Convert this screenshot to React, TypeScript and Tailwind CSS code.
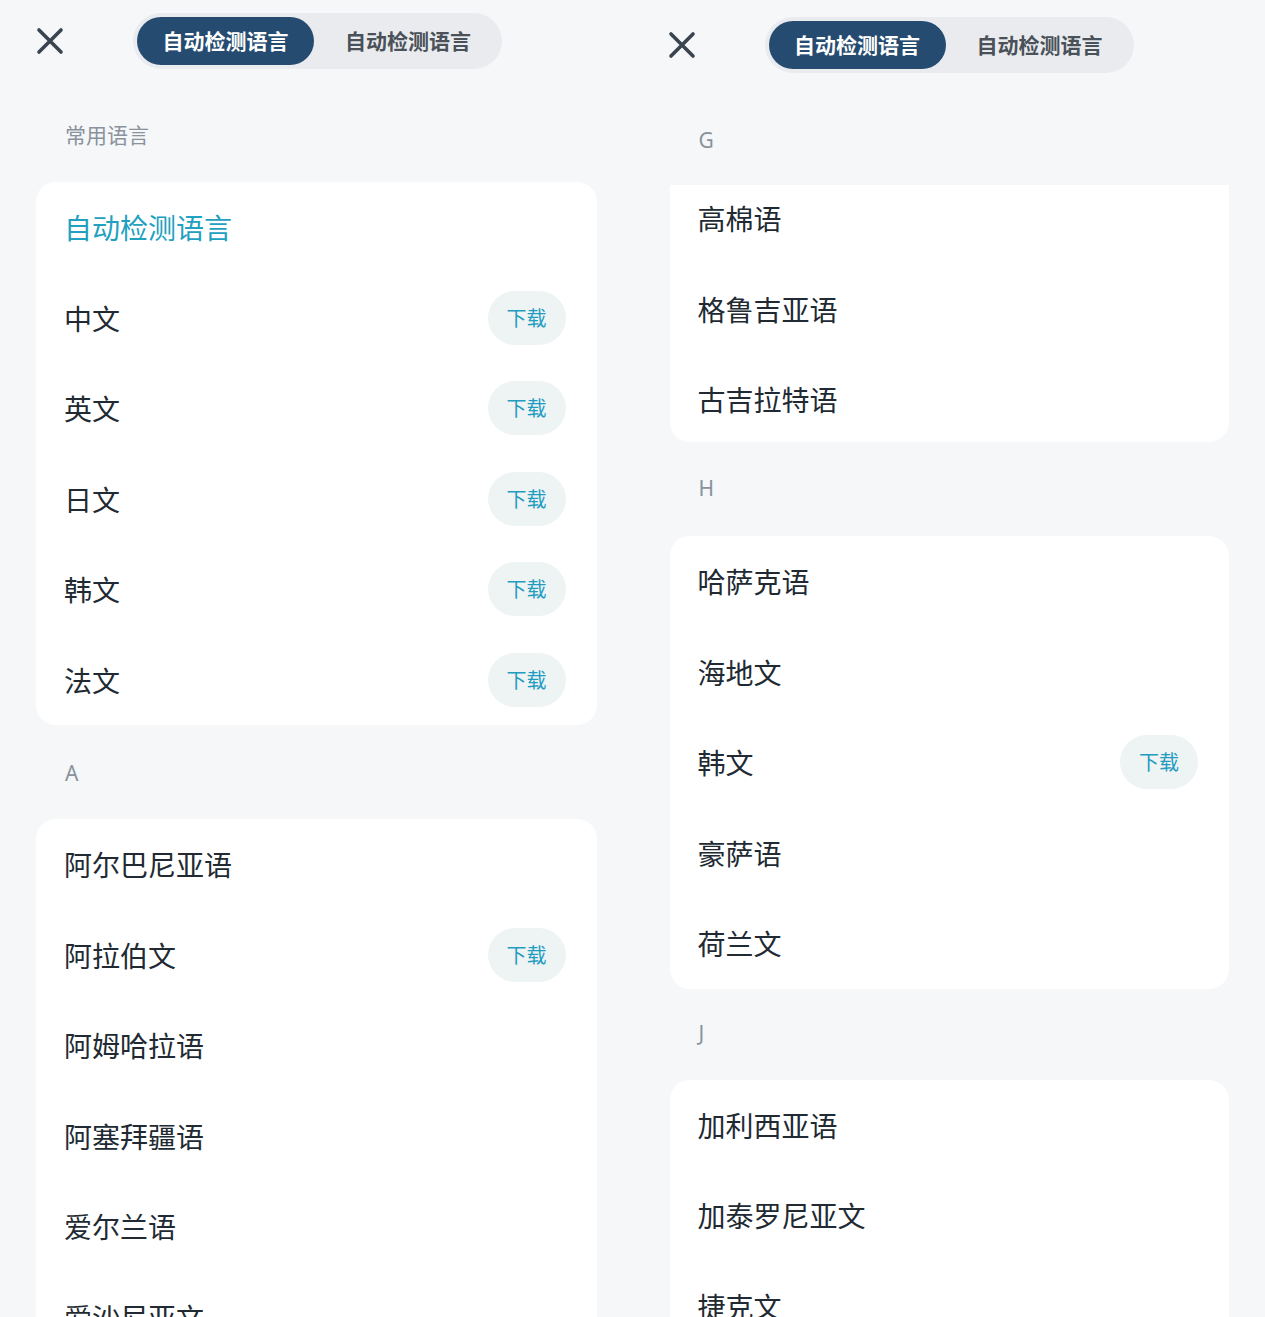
type Lang = { name: string; download?: boolean };

const common: Lang[] = [
  { name: '中文', download: true },
  { name: '英文', download: true },
  { name: '日文', download: true },
  { name: '韩文', download: true },
  { name: '法文', download: true },
];

const groupA: Lang[] = [
  { name: '阿尔巴尼亚语' },
  { name: '阿拉伯文', download: true },
  { name: '阿姆哈拉语' },
  { name: '阿塞拜疆语' },
  { name: '爱尔兰语' },
  { name: '爱沙尼亚文' },
];

const groupG: Lang[] = [{ name: '高棉语' }, { name: '格鲁吉亚语' }, { name: '古吉拉特语' }];

const groupH: Lang[] = [
  { name: '哈萨克语' },
  { name: '海地文' },
  { name: '韩文', download: true },
  { name: '豪萨语' },
  { name: '荷兰文' },
];

const groupJ: Lang[] = [{ name: '加利西亚语' }, { name: '加泰罗尼亚文' }, { name: '捷克文' }];

const cjk = { fontFamily: '"Noto Sans CJK SC", "Noto Sans", sans-serif' };

function CloseIcon() {
  return (
    <svg width="28" height="28" viewBox="0 0 28 28" fill="none">
      <path
        d="M3 3L25 25M25 3L3 25"
        stroke="#3a444e"
        strokeWidth="3.6"
        strokeLinecap="round"
      />
    </svg>
  );
}

function Header({ className }: { className: string }) {
  return (
    <div className={`flex items-start ${className}`}>
      <div className="w-[132px] h-[56px] flex items-center pl-[35px]">
        <CloseIcon />
      </div>
      <div className="flex items-center h-[56px] w-[369px] rounded-full bg-[#e9ebee] p-[4px]">
        <div className="h-[48px] w-[177px] rounded-full bg-[#264b70] flex items-center justify-center text-white text-[21px] font-bold">
          自动检测语言
        </div>
        <div className="flex-1 flex items-center justify-center text-[#4a5159] text-[21px] font-bold pl-[4px]">
          自动检测语言
        </div>
      </div>
    </div>
  );
}

function SectionLabel({ text, h }: { text: string; h: string }) {
  return (
    <div className={`${h} flex items-center pl-[29px]`}>
      <span
        className="text-[21px] text-[#8a929b]"
        style={{ fontFamily: '"Noto Sans", "Noto Sans CJK SC", sans-serif' }}
      >
        {text}
      </span>
    </div>
  );
}

function Row({ lang }: { lang: Lang }) {
  return (
    <div className="h-[90.5px] flex items-center justify-between pl-[28px] pr-[31px]">
      <span className="text-[28px] text-[#212a32]">{lang.name}</span>
      {lang.download && (
        <span className="h-[54px] w-[78px] rounded-full bg-[#eef3f4] flex items-center justify-center text-[20px] text-[#1f9cc0]">
          下载
        </span>
      )}
    </div>
  );
}

function Card({ items, children }: { items: Lang[]; children?: React.ReactNode }) {
  return (
    <div className="bg-white rounded-[20px] overflow-hidden">
      {children}
      {items.map((l, i) => (
        <Row key={i} lang={l} />
      ))}
    </div>
  );
}

function LeftPanel() {
  return (
    <div className="h-[1317px] overflow-hidden px-[36px]">
      <div className="-mx-[36px] px-[1px]">
        <Header className="h-[90px] pt-[13px]" />
      </div>
      <SectionLabel text="常用语言" h="h-[92px]" />
      <Card items={common}>
        <div className="h-[90.5px] flex items-center pl-[28px]">
          <span className="text-[28px] text-[#21a0c0]">自动检测语言</span>
        </div>
      </Card>
      <SectionLabel text="A" h="h-[94px] pt-[3px]" />
      <Card items={groupA} />
    </div>
  );
}

function RightPanel() {
  return (
    <div className="h-[1317px] overflow-hidden pl-[37px] pr-[36px]">
      <div className="-ml-[37px] -mr-[36px]">
        <Header className="h-[94px] pt-[17px]" />
      </div>
      <SectionLabel text="G" h="h-[91px] pt-[3px]" />
      <div className="bg-white rounded-b-[20px] overflow-hidden h-[257px]">
        <div className="-mt-[12px]">
          {groupG.map((l, i) => (
            <Row key={i} lang={l} />
          ))}
        </div>
      </div>
      <SectionLabel text="H" h="h-[94px]" />
      <Card items={groupH} />
      <SectionLabel text="J" h="h-[91px]" />
      <Card items={groupJ} />
    </div>
  );
}

export default function App() {
  return (
    <div className="w-[1265px] h-[1317px] overflow-hidden bg-[#f5f7f9] grid grid-cols-2" style={cjk}>
      <LeftPanel />
      <RightPanel />
    </div>
  );
}
